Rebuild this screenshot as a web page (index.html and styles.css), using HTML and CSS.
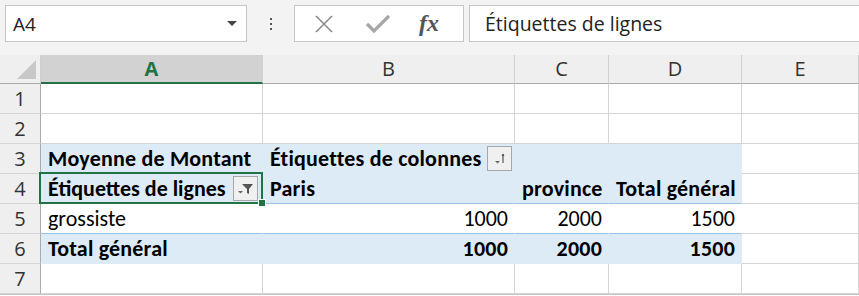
FILE: index.html
```html
<!DOCTYPE html>
<html lang="fr">
<head>
    <meta charset="UTF-8">
    <title>Tableau croisé</title>
    <link rel="stylesheet" href="styles.css">
</head>
<body>
    <div class="toolbar">
        <div class="namebox">
            <span>A4</span>
            <svg class="drop" width="10" height="5" viewBox="0 0 10 5"><path d="M0 0h10L5 5z" fill="#444"/></svg>
        </div>
        <div class="dots"><i></i><i></i><i></i></div>
        <div class="fxbox">
            <svg width="18" height="18" viewBox="0 0 18 18"><path d="M1 1L17 17M17 1L1 17" stroke="#8c8c8c" stroke-width="1.6" fill="none"/></svg>
            <svg width="24" height="20" viewBox="0 0 24 20"><path d="M1 10L8 17L23 2" stroke="#a6a6a6" stroke-width="3.2" fill="none"/></svg>
            <span class="fx">fx</span>
        </div>
        <div class="formula">Étiquettes de lignes</div>
    </div>

    <div class="sheet">
        <div class="corner"><b></b></div>
        <div class="colhead sel">A</div>
        <div class="colhead">B</div>
        <div class="colhead">C</div>
        <div class="colhead">D</div>
        <div class="colhead">E</div>

        <div class="rowhead">1</div>
        <div class="cell"></div><div class="cell"></div><div class="cell"></div><div class="cell"></div><div class="cell"></div>

        <div class="rowhead">2</div>
        <div class="cell"></div><div class="cell"></div><div class="cell"></div><div class="cell"></div><div class="cell"></div>

        <div class="rowhead">3</div>
        <div class="cell pv bold">Moyenne de Montant</div>
        <div class="cell pv bold span3">Étiquettes de colonnes
            <span class="btn">
                <svg width="14" height="14" viewBox="0 0 14 14"><path d="M2 9h5L4.5 11.5z" fill="#666"/><path d="M10 2v9" stroke="#555" stroke-width="1.2"/><path d="M8.5 4L10 1.5L11.5 4z" fill="#555"/></svg>
            </span>
        </div>
        <div class="cell"></div>

        <div class="rowhead">4</div>
        <div class="cell pv bold line active">Étiquettes de lignes
            <span class="btn">
                <svg width="16" height="14" viewBox="0 0 16 14"><path d="M4 2h11L11 7v5L9 11V7z" fill="#555"/><path d="M0 9h5L2.5 11.5z" fill="#666"/></svg>
            </span>
        </div>
        <div class="cell pv bold line">Paris</div>
        <div class="cell pv bold line">province</div>
        <div class="cell pv bold line">Total général</div>
        <div class="cell"></div>

        <div class="rowhead">5</div>
        <div class="cell pw line">grossiste</div>
        <div class="cell pw line num">1000</div>
        <div class="cell pw line num">2000</div>
        <div class="cell pw line num">1500</div>
        <div class="cell"></div>

        <div class="rowhead">6</div>
        <div class="cell pv bold">Total général</div>
        <div class="cell pv bold num">1000</div>
        <div class="cell pv bold num">2000</div>
        <div class="cell pv bold num">1500</div>
        <div class="cell"></div>

        <div class="rowhead">7</div>
        <div class="cell"></div><div class="cell"></div><div class="cell"></div><div class="cell"></div><div class="cell"></div>
    </div>
</body>
</html>
```

FILE: styles.css
```css
body {
    margin: 0;
    background: #ffffff;
    font-family: Calibri, Carlito, Lato, sans-serif;
    color: #000;
    overflow: hidden;
}
.toolbar {
    display: flex;
    align-items: flex-start;
    height: 55px;
    padding: 5px 0 0 5px;
    box-sizing: border-box;
    background: #f3f3f3;
}
.namebox {
    width: 242px;
    height: 37px;
    box-sizing: border-box;
    background: #fff;
    border: 1px solid #c6c6c6;
    display: flex;
    align-items: center;
    justify-content: space-between;
    padding: 0 9px 0 7px;
    font-family: "Segoe UI", "Open Sans", sans-serif;
    font-size: 19px;
    color: #222;
}
.dots {
    width: 47px;
    height: 37px;
    display: flex;
    flex-direction: column;
    align-items: center;
    justify-content: center;
    gap: 3px;
}
.dots i {
    width: 2px;
    height: 2px;
    background: #555;
}
.fxbox {
    width: 170px;
    height: 37px;
    box-sizing: border-box;
    background: #fff;
    border: 1px solid #c6c6c6;
    display: flex;
    align-items: center;
    padding: 0 0 0 20px;
    gap: 33px;
}
.fx {
    font-family: "Liberation Serif", serif;
    font-style: italic;
    font-weight: bold;
    font-size: 24px;
    color: #555;
    margin-left: -4px;
}
.formula {
    flex: 1;
    margin-left: 5px;
    height: 37px;
    box-sizing: border-box;
    background: #fff;
    border: 1px solid #c6c6c6;
    border-right: none;
    padding-left: 15px;
    line-height: 35px;
    font-family: "Segoe UI", "Open Sans", sans-serif;
    font-size: 19.5px;
    color: #222;
}
.sheet {
    display: grid;
    grid-template-columns: 41px 222px 252px 94px 133px 1fr;
    grid-template-rows: 29px repeat(7, 30px);
    border-bottom: 1px solid #c6c6c6;
}
.corner {
    background: #efefef;
    border-right: 1px solid #d0d0d0;
    border-bottom: 1px solid #ababab;
    display: flex;
    align-items: flex-end;
    justify-content: flex-end;
    padding: 0 4px 4px 0;
}
.corner b {
    width: 0;
    height: 0;
    border-left: 19px solid transparent;
    border-bottom: 19px solid #c8c8c8;
}
.colhead {
    background: #efefef;
    border-right: 1px solid #d0d0d0;
    border-bottom: 1px solid #ababab;
    text-align: center;
    line-height: 28px;
    font-family: "Segoe UI", "Open Sans", sans-serif;
    font-size: 20px;
    color: #333;
}
.colhead.sel {
    background: #d2d2d2;
    border-bottom: 2px solid #217346;
    line-height: 27px;
    color: #217346;
    font-weight: bold;
}
.rowhead {
    background: #efefef;
    border-right: 1px solid #ababab;
    border-bottom: 1px solid #d4d4d4;
    text-align: center;
    line-height: 29px;
    font-family: "Segoe UI", "Open Sans", sans-serif;
    font-size: 20px;
    color: #333;
}
.cell {
    border-right: 1px solid #d4d4d4;
    border-bottom: 1px solid #d4d4d4;
    padding: 0 6px 0 7px;
    font-size: 22px;
    line-height: 29px;
    white-space: nowrap;
    position: relative;
    display: flex;
    align-items: center;
}
.cell.span3 {
    grid-column: span 3;
}
.pv {
    background: #ddebf7;
    border-right-color: #ddebf7;
    border-bottom-color: #ddebf7;
}
.pw {
    border-right-color: #fff;
}
.line {
    border-bottom-color: #9bc2e6;
}
.bold {
    font-weight: bold;
    letter-spacing: 0.2px;
}
.num {
    justify-content: flex-end;
}
.btn {
    width: 25px;
    height: 25px;
    box-sizing: border-box;
    margin-left: 6px;
    background: #f0f0f0;
    border: 1px solid #a8a8a8;
    display: flex;
    align-items: center;
    justify-content: center;
    letter-spacing: 0;
}
.active {
    letter-spacing: 0;
}
.active .btn {
    margin-left: auto;
    margin-right: -2px;
}
.active::after {
    content: "";
    position: absolute;
    left: -2px;
    top: -2px;
    right: -1px;
    bottom: -1px;
    border: 2px solid #217346;
    pointer-events: none;
}
.active::before {
    content: "";
    position: absolute;
    right: -4px;
    bottom: -4px;
    width: 6px;
    height: 6px;
    background: #217346;
    border: 1px solid #fff;
    z-index: 2;
}
```
